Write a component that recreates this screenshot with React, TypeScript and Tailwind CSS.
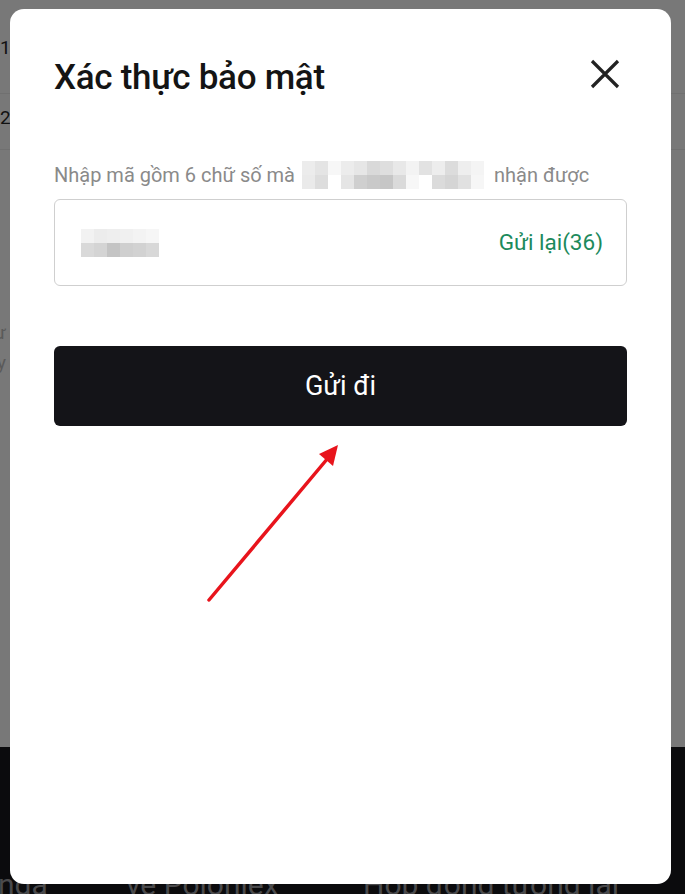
import React from "react";

const font = { fontFamily: '"Source Sans Pro", Roboto, "Noto Sans", sans-serif' };

const labelBlur = [
  ["#ececec", "#e4e4e4", "#f7f7f7", "#ececec", "#e6e6e6", "#d9d9d9", "#dedede", "#e8e8e8", "#f3f3f3", "#e2e2e2", "#ededed", "#dcdcdc", "#eeeeee", "#f4f4f4"],
  ["#eaeaea", "#dddddd", "#ffffff", "#e5e5e5", "#cfcfcf", "#c9c9c9", "#c6c6c6", "#dadada", "#f7f7f7", "#ffffff", "#dbdbdb", "#d5d5d5", "#e1e1e1", "#f6f6f6"],
];

const inputBlur = [
  ["#f2f2f2", "#ececec", "#eeeeee", "#f0f0f0", "#f3f3f3", "#f6f6f6"],
  ["#d9d9d9", "#d4d4d4", "#c4c4c4", "#cfcfcf", "#d2d2d2", "#d8d8d8"],
];

function Pixels({ rows, cell }: { rows: string[][]; cell: string }) {
  return (
    <div className="flex flex-col">
      {rows.map((r, i) => (
        <div key={i} className="flex">
          {r.map((c, j) => (
            <div key={j} className={cell} style={{ background: c }} />
          ))}
        </div>
      ))}
    </div>
  );
}

export default function App() {
  return (
    <div className="relative w-[685px] h-[894px] overflow-hidden" style={font}>
      {/* page behind the overlay */}
      <div className="flex flex-col h-full">
        <div className="h-[747px] bg-[#787878] flex flex-col text-[19px] text-[#111]">
          <div className="h-[30px]" />
          <div className="h-[64px] border-b border-[#707070] pt-[4px]">1</div>
          <div className="h-[56px] border-b border-[#707070] pt-[10px]">2</div>
          <div className="h-[168px]" />
          <div className="text-[#5a5a5a] leading-[30px] -ml-[6px]">ư</div>
          <div className="text-[#5a5a5a] leading-[30px] -ml-[3px]">y</div>
        </div>
        <div className="flex-1 bg-[#0b0b0d] flex items-end text-[30px] text-[#4a4a4c] leading-none">
          <div className="flex w-full translate-y-[6px] -ml-[2px]">
            <span className="w-[128px]">nga</span>
            <span className="w-[237px]">về Poloniex</span>
            <span className="whitespace-nowrap">Hợp đồng tương lai</span>
          </div>
        </div>
      </div>

      {/* modal */}
      <div className="absolute left-[10px] top-[9px] w-[661px] h-[875px] bg-white rounded-[14px] px-[44px] pt-[50px]">
        <div className="flex items-start justify-between">
          <h1 className="text-[35px] leading-[38px] font-medium text-[#141414] tracking-[-0.3px]">Xác thực bảo mật</h1>
          <button type="button" className="-mt-[1px] mr-[6px] text-[#222]">
            <svg width="32" height="32" viewBox="0 0 32 32">
              <path d="M3 3 L29 29 M29 3 L3 29" stroke="currentColor" strokeWidth="3.2" fill="none" />
            </svg>
          </button>
        </div>

        <div className="mt-[63px] flex items-center text-[20px] text-[#8a8a8a] leading-[30px]">
          <span>Nhập mã gồm 6 chữ số mà</span>
          <div className="ml-[7px] mr-[10px]">
            <Pixels rows={labelBlur} cell="w-[13px] h-[14px]" />
          </div>
          <span>nhận được</span>
        </div>

        <div className="mt-[9px] h-[87px] border-[1.5px] border-[#cfcfcf] rounded-[6px] flex items-center justify-between pl-[26px] pr-[23px]">
          <Pixels rows={inputBlur} cell="w-[13px] h-[14px]" />
          <span className="text-[22.5px] text-[#1c8a5c]">Gửi lại(36)</span>
        </div>

        <button type="button" className="mt-[60px] w-full h-[80px] bg-[#141418] rounded-[6px] text-white text-[27px]">
          Gửi đi
        </button>
      </div>

      {/* annotation arrow */}
      <svg className="absolute left-0 top-0" width="685" height="894">
        <line x1="209" y1="600" x2="328" y2="458" stroke="#e8141c" strokeWidth="3.5" strokeLinecap="round" />
        <polygon points="338,445 333,466 319,454" fill="#e8141c" />
      </svg>
    </div>
  );
}
